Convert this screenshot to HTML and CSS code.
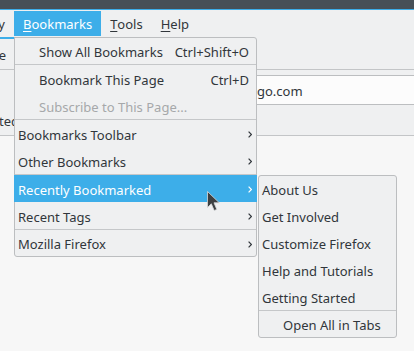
FILE: index.html
```html
<!DOCTYPE html>
<html lang="en">
<head>
    <meta charset="UTF-8">
    <meta name="viewport" content="width=device-width, initial-scale=1.0">
    <title>Bookmarks Menu</title>
    <link rel="stylesheet" href="styles.css">
</head>
<body>
    <div class="window">
        <div class="titlebar"></div>

        <div class="menubar">
            <div class="clip-end menubar-lead">
                <span class="menubar-item">Hi<u>s</u>tory</span>
            </div>
            <span class="menubar-item active"><u>B</u>ookmarks</span>
            <span class="menubar-item"><u>T</u>ools</span>
            <span class="menubar-item"><u>H</u>elp</span>
        </div>

        <div class="tabbar">
            <div class="tab">
                <div class="clip-end tab-label"><span>Mozilla Firefox Start Page</span></div>
            </div>
        </div>

        <div class="navbar">
            <div class="urlbar">
                <div class="clip-end url-hidden"><span>https://duckduck</span></div>
                <span>go.com</span>
            </div>
        </div>

        <div class="bookmarks-bar">
            <div class="clip-end bookmark-label"><span>Getting Started</span></div>
        </div>

        <div class="content"></div>

        <!-- Bookmarks menu -->
        <div class="menu">
            <div class="menu-item icon-gap">Show All Bookmarks<span class="shortcut">Ctrl+Shift+O</span></div>
            <div class="menu-sep"></div>
            <div class="menu-item icon-gap">Bookmark This Page<span class="shortcut">Ctrl+D</span></div>
            <div class="menu-item icon-gap disabled">Subscribe to This Page...</div>
            <div class="menu-sep"></div>
            <div class="menu-item has-sub">Bookmarks Toolbar
                <svg class="arrow" width="4" height="7" viewBox="0 0 4 7"><path d="M0.6 0.6 L3.4 3.5 L0.6 6.4" /></svg>
            </div>
            <div class="menu-item has-sub">Other Bookmarks
                <svg class="arrow" width="4" height="7" viewBox="0 0 4 7"><path d="M0.6 0.6 L3.4 3.5 L0.6 6.4" /></svg>
            </div>
            <div class="menu-sep"></div>
            <div class="menu-item has-sub active">Recently Bookmarked
                <svg class="arrow" width="4" height="7" viewBox="0 0 4 7"><path d="M0.6 0.6 L3.4 3.5 L0.6 6.4" /></svg>
            </div>
            <div class="menu-item has-sub">Recent Tags
                <svg class="arrow" width="4" height="7" viewBox="0 0 4 7"><path d="M0.6 0.6 L3.4 3.5 L0.6 6.4" /></svg>
            </div>
            <div class="menu-sep"></div>
            <div class="menu-item has-sub">Mozilla Firefox
                <svg class="arrow" width="4" height="7" viewBox="0 0 4 7"><path d="M0.6 0.6 L3.4 3.5 L0.6 6.4" /></svg>
            </div>
        </div>

        <!-- Recently Bookmarked submenu -->
        <div class="menu submenu">
            <div class="menu-item">About Us</div>
            <div class="menu-item">Get Involved</div>
            <div class="menu-item">Customize Firefox</div>
            <div class="menu-item">Help and Tutorials</div>
            <div class="menu-item">Getting Started</div>
            <div class="menu-sep"></div>
            <div class="menu-item open-all">Open All in Tabs</div>
        </div>

        <svg class="cursor" width="14" height="22" viewBox="0 0 14 22">
            <path d="M0.5 0.5 L0.5 16.5 L4.3 12.8 L7.2 19.5 L9.8 18.4 L7 11.8 L12.3 11.8 Z" />
        </svg>
    </div>
</body>
</html>
```

FILE: styles.css
```css
body {
    margin: 0;
    font-family: "Noto Sans", sans-serif;
    font-size: 13px;
    color: #31363b;
    background: #f7f7f7;
}

.window {
    position: relative;
    width: 414px;
    height: 351px;
    overflow: hidden;
    display: flex;
    flex-direction: column;
}

/* text that is cut off on its left side */
.clip-end {
    display: flex;
    justify-content: flex-end;
    overflow: hidden;
    flex: none;
    white-space: nowrap;
}

.titlebar {
    flex: none;
    height: 9px;
    background: #475057;
    border-bottom: 1px solid #3daee9;
}

.menubar {
    flex: none;
    height: 27px;
    display: flex;
    align-items: center;
    background: #eff0f1;
}

.menubar-lead {
    width: 14px;
}

.menubar-item {
    height: 25px;
    padding: 1px 9px 0;
    box-sizing: border-box;
    display: flex;
    align-items: center;
    white-space: nowrap;
}

.menubar-item.active {
    background: #3daee9;
    color: #fff;
}

u {
    text-decoration-thickness: 1px;
    text-underline-offset: 2px;
}

.tabbar {
    flex: none;
    height: 32px;
    background: #eff0f1;
    border-bottom: 1px solid #c3c5c7;
}

.tab {
    width: 200px;
    height: 32px;
    box-sizing: border-box;
    border-top: 2px solid #3daee9;
    display: flex;
    align-items: center;
    padding-top: 1px;
}

.tab-label {
    width: 6px;
}

.navbar {
    flex: none;
    height: 35px;
    padding-top: 5px;
    box-sizing: border-box;
    background: #eff0f1;
    display: flex;
}

.urlbar {
    height: 30px;
    flex: 1;
    margin-left: 60px;
    margin-right: -10px;
    box-sizing: border-box;
    border: 1px solid #bcbec0;
    background: #fcfcfc;
    display: flex;
    align-items: center;
    padding-top: 1px;
    white-space: nowrap;
}

.url-hidden {
    width: 196px;
}

.bookmarks-bar {
    flex: none;
    height: 31px;
    box-sizing: border-box;
    background: #eff0f1;
    border-bottom: 1px solid #c3c5c7;
    display: flex;
    align-items: center;
    padding-top: 2px;
}

.bookmark-label {
    width: 19px;
}

.content {
    flex: 1;
    background: #f7f7f7;
}

/* popup menus */
.menu {
    position: absolute;
    left: 14px;
    top: 37px;
    width: 243px;
    box-sizing: border-box;
    background: #eff0f1;
    border: 1px solid #bcbec0;
    border-radius: 0 3px 3px 3px;
}

.submenu {
    left: 258px;
    top: 175px;
    width: 139px;
    border-radius: 3px;
}

.menu-item {
    height: 27px;
    box-sizing: border-box;
    padding: 2px 4px 0 3px;
    display: flex;
    align-items: center;
    white-space: nowrap;
}

.menu-item:first-child,
.menu-item:last-child {
    height: 26px;
}

.menu-item.icon-gap {
    padding-left: 24px;
    padding-right: 7px;
}

.menu-item.disabled {
    color: #a6a8aa;
}

.menu-item.active {
    background: #3daee9;
    color: #fff;
    margin: 0 -1px;
    padding-left: 4px;
    padding-right: 5px;
}

.shortcut {
    margin-left: auto;
}

.arrow {
    margin-left: auto;
}

.arrow path {
    fill: none;
    stroke: currentColor;
    stroke-width: 1.2;
}

.menu-item.open-all {
    padding-left: 24px;
}

.menu-sep {
    height: 1px;
    background: #c5c7c9;
}

.cursor {
    position: absolute;
    left: 207px;
    top: 191px;
}

.cursor path {
    fill: #3c3f41;
    stroke: #d8dadc;
    stroke-width: 0.8;
    stroke-linejoin: round;
}
```
